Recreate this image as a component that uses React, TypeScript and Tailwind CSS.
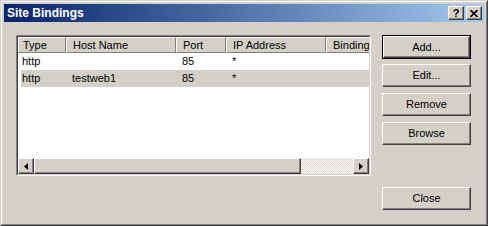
import React from 'react'

const font = { fontFamily: '"Liberation Sans", Arial, sans-serif' }

const COLS = [
  { label: 'Type', w: 'w-[48px]', pad: 'pl-[4px]' },
  { label: 'Host Name', w: 'w-[110px]', pad: 'pl-[6px]' },
  { label: 'Port', w: 'w-[50px]', pad: 'pl-[6px]' },
  { label: 'IP Address', w: 'w-[100px]', pad: 'pl-[6px]' },
  { label: 'Binding', w: 'w-[80px]', pad: 'pl-[6px]' },
]

const ROWS = [
  { type: 'http', host: '', port: '85', ip: '*', sel: false },
  { type: 'http', host: 'testweb1', port: '85', ip: '*', sel: true },
]

function Btn({ label, isDefault = false }: { label: string; isDefault?: boolean }) {
  const inner = (
    <div className="flex h-full w-full items-center justify-center border border-t-white border-l-white border-r-[#404040] border-b-[#404040] bg-[#d4d0c8] text-[11px] text-black shadow-[inset_-1px_-1px_#808080]">
      {label}
    </div>
  )
  if (isDefault) {
    return <div className="h-[24px] w-[89px] border border-black">{inner}</div>
  }
  return <div className="h-[23px] w-[89px]">{inner}</div>
}

function Arrow({ dir }: { dir: 'left' | 'right' }) {
  return (
    <div className="flex h-[16px] w-[16px] shrink-0 items-center justify-center border border-t-white border-l-white border-r-[#404040] border-b-[#404040] bg-[#d4d0c8] shadow-[inset_-1px_-1px_#808080]">
      <svg width="4" height="7" viewBox="0 0 4 7">
        {dir === 'left' ? <path d="M4 0 L0 3.5 L4 7 Z" fill="#000" /> : <path d="M0 0 L4 3.5 L0 7 Z" fill="#000" />}
      </svg>
    </div>
  )
}

export default function App() {
  return (
    <div className="h-[226px] w-[488px] border border-t-[#d4d0c8] border-l-[#d4d0c8] border-r-[#404040] border-b-[#404040] bg-[#d4d0c8]" style={font}>
      <div className="flex h-full w-full flex-col border border-t-white border-l-white border-r-[#808080] border-b-[#808080] p-[2px]">
        {/* title bar */}
        <div className="flex h-[18px] shrink-0 items-center bg-gradient-to-r from-[#0a246a] to-[#a6caf0] pl-[3px] pr-[2px]">
          <span className="flex-1 text-[12px] font-bold text-white">Site Bindings</span>
          <div className="flex h-[14px] w-[16px] items-center justify-center border border-t-white border-l-white border-r-[#404040] border-b-[#404040] bg-[#d4d0c8] text-[11px] font-bold leading-none text-black shadow-[inset_-1px_-1px_#808080]">
            ?
          </div>
          <div className="ml-[2px] flex h-[14px] w-[16px] items-center justify-center border border-t-white border-l-white border-r-[#404040] border-b-[#404040] bg-[#d4d0c8] shadow-[inset_-1px_-1px_#808080]">
            <svg width="8" height="7" viewBox="0 0 8 7">
              <path d="M0.5 0 L7.5 7 M7.5 0 L0.5 7" stroke="#000" strokeWidth="1.6" />
            </svg>
          </div>
        </div>

        <div className="flex flex-1 pl-[12px] pt-[13px]">
          {/* list view */}
          <div className="h-[141px] w-[355px] border border-t-[#808080] border-l-[#808080] border-r-white border-b-white">
            <div className="flex h-full w-full flex-col overflow-hidden border border-t-[#404040] border-l-[#404040] border-r-[#d4d0c8] border-b-[#d4d0c8] bg-white">
              <div className="flex h-[16px] shrink-0">
                {COLS.map((c) => (
                  <div
                    key={c.label}
                    className={`${c.w} ${c.pad} flex shrink-0 items-center border border-t-white border-l-white border-r-[#808080] border-b-[#808080] bg-[#d4d0c8] text-[11px] text-black`}
                  >
                    {c.label}
                  </div>
                ))}
              </div>
              <div className="flex-1">
                {ROWS.map((r, i) => (
                  <div key={i} className="flex h-[17px] items-center text-[11px] text-black">
                    <div className={`ml-[3px] flex h-full flex-1 items-center ${r.sel ? 'bg-[#d4d0c8]' : ''}`}>
                      <div className="w-[45px] shrink-0 pl-[1px]">{r.type}</div>
                      <div className="w-[110px] shrink-0 pl-[6px]">{r.host}</div>
                      <div className="w-[50px] shrink-0 pl-[6px]">{r.port}</div>
                      <div className="w-[100px] shrink-0 pl-[6px]">{r.ip}</div>
                    </div>
                  </div>
                ))}
              </div>
              {/* horizontal scrollbar */}
              <div className="flex h-[16px] shrink-0">
                <Arrow dir="left" />
                <div className="h-[16px] w-[267px] shrink-0 border border-t-white border-l-white border-r-[#404040] border-b-[#404040] bg-[#d4d0c8] shadow-[inset_-1px_-1px_#808080]" />
                <div className="h-[16px] flex-1 bg-[repeating-conic-gradient(#d4d0c8_0_25%,#ffffff_0_50%)] bg-[length:2px_2px]" />
                <Arrow dir="right" />
              </div>
            </div>
          </div>

          {/* buttons */}
          <div className="ml-[11px] flex flex-col">
            <Btn label="Add..." isDefault />
            <div className="mt-[5px]">
              <Btn label="Edit..." />
            </div>
            <div className="mt-[6px]">
              <Btn label="Remove" />
            </div>
            <div className="mt-[6px]">
              <Btn label="Browse" />
            </div>
            <div className="mt-[42px]">
              <Btn label="Close" />
            </div>
          </div>
        </div>
      </div>
    </div>
  )
}
